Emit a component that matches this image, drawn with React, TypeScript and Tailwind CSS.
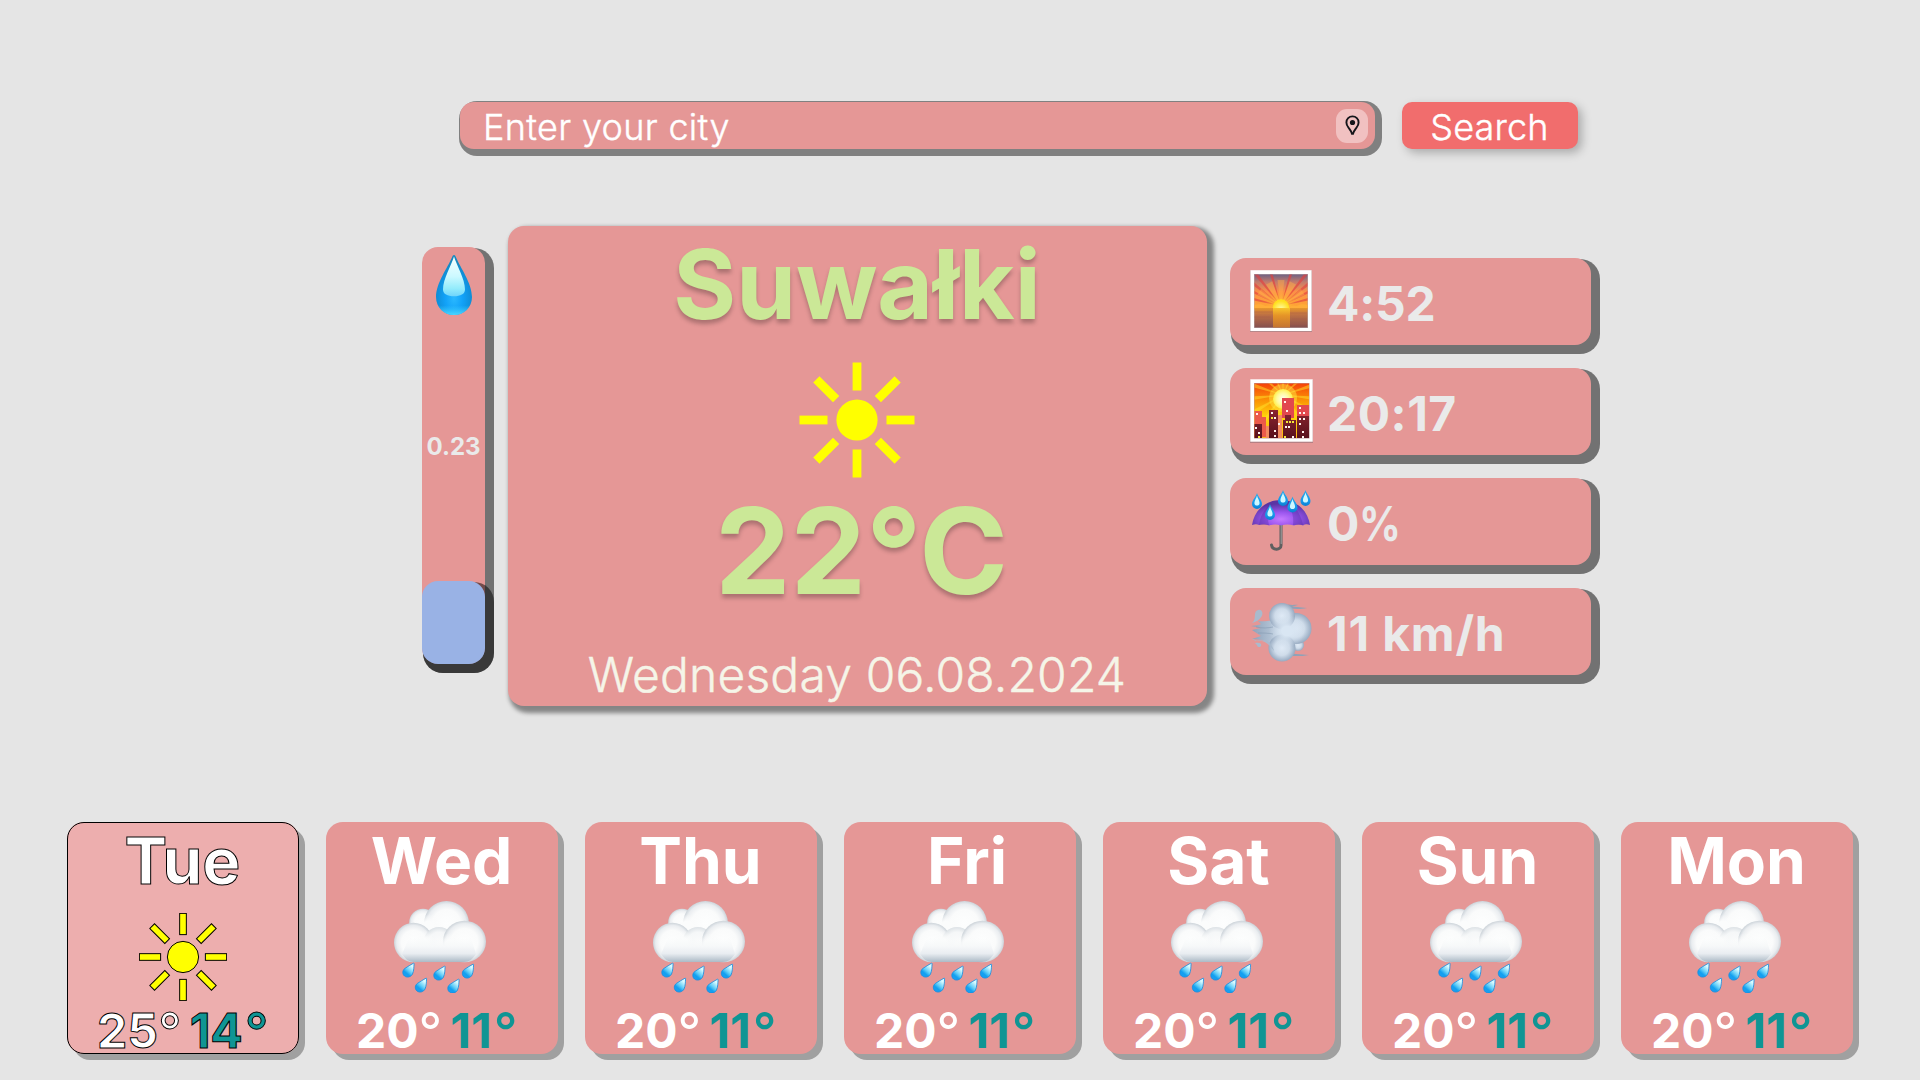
import React from "react";

const RAY_ANGLES = [0, 45, 90, 135, 180, 225, 270, 315];

function Sun({ className, outlined = false }: { className: string; outlined?: boolean }) {
  return (
    <svg
      viewBox="-58 -58 116 116"
      className={className}
      fill="#ffff00"
      stroke={outlined ? "#000" : "none"}
      strokeWidth={outlined ? 1.3 : 0}
    >
      <circle r="20.6" />
      {RAY_ANGLES.map((a) => (
        <rect key={a} x="-4.4" y="-57.5" width="8.8" height="28" transform={`rotate(${a})`} />
      ))}
    </svg>
  );
}

function Pin() {
  return (
    <svg viewBox="0 0 15 21" className="h-[21px] w-[15px]">
      <path
        d="M7.5 1.4C4 1.4 1.4 4 1.4 7.4c0 1.9.8 3.4 2 5.1 1.5 2.1 3.2 4 3.6 6.3h1c.4-2.3 2.1-4.2 3.6-6.3 1.2-1.7 2-3.2 2-5.1 0-3.400-2.600-6-6.100-6Z"
        fill="none"
        stroke="#15151a"
        strokeWidth="1.9"
      />
      <circle cx="7.5" cy="7.500" r="2.600" fill="#15151a" />
    </svg>
  );
}

function Droplet() {
  return (
    <svg viewBox="0 0 36 60" className="h-[60px] w-[36px]">
      <defs>
        <radialGradient id="dropBody" cx="0.5" cy="0.72" r="0.6">
          <stop offset="0" stopColor="#2ab8ff" />
          <stop offset="0.4" stopColor="#12a2f8" />
          <stop offset="0.75" stopColor="#0f90dc" />
          <stop offset="1" stopColor="#1589c0" />
        </radialGradient>
        <linearGradient id="dropFloor" x1="0" y1="0" x2="0" y2="1">
          <stop offset="0.84" stopColor="#3fd0ff" stopOpacity="0" />
          <stop offset="1" stopColor="#4ad8ff" />
        </linearGradient>
        <linearGradient id="dropLight" x1="0" y1="0" x2="0" y2="1">
          <stop offset="0" stopColor="#f6ffff" />
          <stop offset="0.5" stopColor="#ccf9ff" />
          <stop offset="0.8" stopColor="#94ecfc" />
          <stop offset="1" stopColor="#6fd4fb" />
        </linearGradient>
      </defs>
      <path d="M18 0c-1 0-1.600 1.300-2.200 2.700C12 12 0 28 0 42c0 10.500 8 18 18 18s18-7.500 18-18C36 28 24 12 20.200 2.700 19.600 1.300 19 0 18 0Z" fill="url(#dropBody)" />
      <path d="M18 0c-1 0-1.600 1.300-2.200 2.700C12 12 0 28 0 42c0 10.500 8 18 18 18s18-7.500 18-18C36 28 24 12 20.200 2.700 19.600 1.300 19 0 18 0Z" fill="url(#dropFloor)" />
      <path d="M18 1.500C15.500 10 7 24 7 34.500 7 39 11.500 41.300 18 41.300S29 39 29 34.500C29 24 20.500 10 18 1.500Z" fill="url(#dropLight)" />
    </svg>
  );
}

function RainCloud() {
  return (
    <svg viewBox="0 0 92 92" className="h-[92px] w-[92px]">
      <defs>
        <radialGradient id="puff" cx="0.5" cy="0.5" r="0.5">
          <stop offset="0" stopColor="#fdfefe" />
          <stop offset="0.62" stopColor="#fafbfb" />
          <stop offset="0.86" stopColor="#eaedf0" />
          <stop offset="1" stopColor="#ccd3d9" />
        </radialGradient>
        <radialGradient id="puffSoft" cx="0.5" cy="0.5" r="0.5">
          <stop offset="0" stopColor="#fbfcfc" />
          <stop offset="0.7" stopColor="#f5f7f8" />
          <stop offset="1" stopColor="#dde2e6" />
        </radialGradient>
        <radialGradient id="puffFill">
          <stop offset="0.4" stopColor="#fbfcfc" />
          <stop offset="1" stopColor="#fbfcfc" stopOpacity="0" />
        </radialGradient>
        <linearGradient id="cloudBase" x1="0" y1="0" x2="0" y2="1">
          <stop offset="0" stopColor="#f8fafa" stopOpacity="0" />
          <stop offset="0.35" stopColor="#f6f8f9" />
          <stop offset="0.65" stopColor="#e9edf1" />
          <stop offset="1" stopColor="#acbac6" />
        </linearGradient>
        <linearGradient id="rainDrop" x1="0.9" y1="0" x2="0.2" y2="1">
          <stop offset="0.2" stopColor="#d9fbff" />
          <stop offset="0.55" stopColor="#5fcdf8" />
          <stop offset="0.75" stopColor="#12a0f0" />
          <stop offset="1" stopColor="#1a9df2" />
        </linearGradient>
      </defs>
      <circle cx="29" cy="21.500" r="13.800" fill="url(#puff)" />
      <circle cx="52.500" cy="22.500" r="22.500" fill="url(#puff)" />
      <ellipse cx="34" cy="25" rx="12" ry="12" fill="url(#puffFill)" />
      <ellipse cx="19.500" cy="41.500" rx="19.500" ry="19.800" fill="url(#puff)" />
      <ellipse cx="45" cy="43" rx="16" ry="17" fill="url(#puffSoft)" />
      <ellipse cx="30" cy="42" rx="11" ry="13" fill="url(#puffFill)" />
      <ellipse cx="70.500" cy="40.500" rx="21.500" ry="20.800" fill="url(#puff)" />
      <ellipse cx="56" cy="44" rx="12" ry="12" fill="url(#puffFill)" />
      <path d="M15 37h62l5 16c-3 5-7 8-12 8H20c-5 0-9-3-12-8Z" fill="url(#cloudBase)" />
      {[
        [8.500, 62],
        [39.500, 65],
        [68, 63],
        [21, 77],
        [53.500, 78],
      ].map(([x, y]) => (
        <g key={`${x}-${y}`} transform={`translate(${x} ${y})`}>
          <path
            d="M11 .2C8.500 1.600 5 3.600 2.300 5.500-.3 7.400-.3 11.200 2 13c2.600 2 6.600 1 8-2 1.500-3.300 1.300-7 1.600-10.300 0-.5-.2-.7-.6-.5Z"
            fill="url(#rainDrop)"
            stroke="#138be0"
            strokeWidth="0.8"
          />
        </g>
      ))}
    </svg>
  );
}

function Sunrise() {
  return (
    <svg viewBox="0 0 62 62" className="h-[62px] w-[62px]">
      <defs>
        <linearGradient id="dawnSky" x1="0" y1="0" x2="0" y2="1">
          <stop offset="0" stopColor="#6f6284" />
          <stop offset="0.22" stopColor="#c27a6c" />
          <stop offset="0.5" stopColor="#fb9048" />
          <stop offset="1" stopColor="#ffa632" />
        </linearGradient>
        <linearGradient id="dawnSea" x1="0" y1="0" x2="0" y2="1">
          <stop offset="0" stopColor="#e8962c" />
          <stop offset="0.35" stopColor="#bd7044" />
          <stop offset="1" stopColor="#85504f" />
        </linearGradient>
        <radialGradient id="dawnSun" cx="0.5" cy="0.6" r="0.5">
          <stop offset="0" stopColor="#fffca8" />
          <stop offset="1" stopColor="#ffdf1e" />
        </radialGradient>
        <radialGradient id="dawnGlow">
          <stop offset="0" stopColor="#ffe03c" />
          <stop offset="1" stopColor="#ff9a30" stopOpacity="0" />
        </radialGradient>
        <linearGradient id="dawnPath" x1="0" y1="0" x2="0" y2="1">
          <stop offset="0" stopColor="#ffd52a" />
          <stop offset="0.4" stopColor="#f3a01e" />
          <stop offset="1" stopColor="#d98028" />
        </linearGradient>
        <clipPath id="dawnClip">
          <rect x="4.500" y="4.500" width="53" height="34" />
        </clipPath>
      </defs>
      <rect x="0" y="0.600" width="62" height="61.400" fill="#b5888a" />
      <rect x="0.400" y="0.200" width="61.200" height="60.800" fill="#fff" />
      <rect x="4" y="4" width="54" height="54" fill="#b9a9a9" />
      <rect x="4.500" y="4.500" width="53" height="34" fill="url(#dawnSky)" />
      <g clipPath="url(#dawnClip)">
        {[-76, -63, -51, -38, -17, 17, 38, 51, 63, 76].map((a) => (
          <path key={a} d="M31 36 29.200-8h3.600Z" fill="#e2403f" opacity="0.650" transform={`rotate(${a} 31 36)`} />
        ))}
        {[-57, -27, 0, 27, 57].map((a) => (
          <path key={a} d="M31 36 27.500 10h7Z" fill="#ffb04a" opacity="0.450" transform={`rotate(${a} 31 36)`} />
        ))}
        <circle cx="31" cy="37" r="17" fill="url(#dawnGlow)" />
        <path d="M4 35c5-1 8-1 11 1 5-1 9 0 12 3H4ZM58 35c-5-1-8-1-11 1-5-1-9 0-12 3h23Z" fill="#ffad38" />
        <circle cx="31" cy="37.500" r="8.300" fill="url(#dawnSun)" />
      </g>
      <rect x="4.500" y="38" width="53" height="19.500" fill="url(#dawnSea)" />
      <rect x="23" y="38" width="17" height="19.500" fill="url(#dawnPath)" opacity="0.750" />
      <path d="M4.500 42h18M40 43h17M4.500 47h16M42 49h15M4.500 52h18M40 54h17" stroke="#a75c4c" strokeWidth="0.800" opacity="0.500" />
    </svg>
  );
}

function CitySunset() {
  return (
    <svg viewBox="0 0 63 64" className="h-[64px] w-[63px]">
      <defs>
        <linearGradient id="duskSky" x1="0" y1="0" x2="0" y2="1">
          <stop offset="0" stopColor="#f5400a" />
          <stop offset="0.3" stopColor="#fb9005" />
          <stop offset="0.6" stopColor="#ffd40a" />
          <stop offset="1" stopColor="#f9b414" />
        </linearGradient>
        <radialGradient id="duskSun">
          <stop offset="0" stopColor="#fffff0" />
          <stop offset="0.6" stopColor="#fffa9e" />
          <stop offset="1" stopColor="#ffee4a" />
        </radialGradient>
        <linearGradient id="tower" x1="0" y1="0" x2="0" y2="1">
          <stop offset="0" stopColor="#8a2530" />
          <stop offset="1" stopColor="#56101c" />
        </linearGradient>
        <clipPath id="duskClip">
          <rect x="4.500" y="4.500" width="54.500" height="54.500" />
        </clipPath>
      </defs>
      <rect x="0" y="1" width="63" height="63" fill="#b58084" />
      <rect x="0.300" y="0.300" width="62.400" height="62.400" fill="#fff" />
      <rect x="4" y="4" width="55.500" height="55.500" fill="#b99" />
      <g clipPath="url(#duskClip)">
        <rect x="4" y="4" width="56" height="56" fill="url(#duskSky)" />
        {[0, 24, 48, 72, 96, 120, 144, 168, 192, 216, 240, 264, 288, 312, 336].map((a) => (
          <path key={a} d="M33 16 30-34h6Z" fill="#ffe12a" opacity="0.500" transform={`rotate(${a} 33 16)`} />
        ))}
        <circle cx="33" cy="19" r="14" fill="#ffe640" opacity="0.500" />
        <circle cx="33" cy="20" r="10" fill="url(#duskSun)" />
        <path d="M4 32h8v6h4v20H4Z" fill="#ec5a4a" />
        <path d="M27 36h5v24h-5ZM16 47h4v13h-4Z" fill="#f28a60" />
        <path d="M32 19h12v20H32ZM47 26h13v14H47Z" fill="#e2484e" />
        <path d="M19 31h9v29h-9ZM4 45h8v15H4ZM32 41h3v-5h6v5h5v19H33V41ZM47 37h13v23H47Z" fill="url(#tower)" />
        <path d="M34 22h2v2h-2ZM36 31h2v2h-2ZM49 28h2v2h-2ZM49 33h2v2h-2ZM53 33h2v2h-2ZM21 33h2v2h-2ZM24 38h2v2h-2ZM6 34h2v2H6ZM49 39h2v2h-2ZM53 39h2v2h-2ZM49 44h2v2h-2ZM24 51h2v2h-2ZM24 56h2v2h-2ZM35 47h2v2h-2ZM38 47h2v2h-2ZM5 48h2v2H5ZM8 53h2v2H8ZM28 44h2v2h-2ZM52 52h2v2h-2ZM52 57h2v2h-2ZM42 57h2v2h-2Z" fill="#fff3f0" />
        <path d="M21 38h2v2h-2ZM36 42h2v2h-2ZM39 42h2v2h-2ZM42 42h2v2h-2ZM8 57h2v2H8ZM34 57h2v2h-2Z" fill="#f4e83a" />
      </g>
    </svg>
  );
}

function Umbrella() {
  return (
    <svg viewBox="0 0 62 62" className="h-[62px] w-[62px]">
      <defs>
        <radialGradient id="canopy" cx="0.5" cy="0.75" r="0.6">
          <stop offset="0" stopColor="#c57aff" />
          <stop offset="0.45" stopColor="#9a55ee" />
          <stop offset="1" stopColor="#5a34a4" />
        </radialGradient>
        <linearGradient id="umbrellaDrop" x1="0" y1="0" x2="0" y2="1">
          <stop offset="0" stopColor="#26a8ea" />
          <stop offset="0.7" stopColor="#1597ea" />
          <stop offset="1" stopColor="#0b7fd0" />
        </linearGradient>
      </defs>
      <path d="M31 34v21.500c0 4.500-8.500 5.500-9.500-.5" fill="none" stroke="#5f5f60" strokeWidth="3" strokeLinecap="round" />
      <path d="M31.200 34v20" stroke="#a5a2a1" strokeWidth="1" />
      <path d="M2 35C4 21 15 10 31 10s27 11 29 25c-3-1-5-1-7 .5-3-1.500-6-1.500-9 0-4-1.500-9-1.500-13 0-4-1.500-8-1.500-12 0-4-1.500-7-1.500-10-.5-2-1-4-1-7 0Z" fill="url(#canopy)" />
      <path d="M9 35c1-9 6-17 13-22-4 7-5 15-3 22ZM43 35c1-8-1-16-7-24 10 5 15 14 17 24Z" fill="#4f2aa0" opacity="0.350" />
      {[
        [2, 3],
        [15, 14],
        [28, 0],
        [37.500, 6.500],
        [50.500, 0],
      ].map(([x, y]) => (
        <g key={`${x}-${y}`} transform={`translate(${x} ${y})`}>
          <path d="M5 0C4 4 0 7 0 11a5 5 0 0 0 10 0C10 7 6 4 5 0Z" fill="url(#umbrellaDrop)" />
          <path d="M5 2.500C4.500 5 2.400 7.500 2.400 10c0 1.800 1.200 2.600 2.600 2.600S7.600 11.800 7.600 10C7.600 7.500 5.500 5 5 2.500Z" fill="#cdf8ff" />
        </g>
      ))}
    </svg>
  );
}

function Wind() {
  return (
    <svg viewBox="0 0 62 60" className="h-[60px] w-[62px]">
      <defs>
        <radialGradient id="gust" cx="0.5" cy="0.5" r="0.5">
          <stop offset="0" stopColor="#dfeaf6" />
          <stop offset="0.55" stopColor="#cfdcea" />
          <stop offset="1" stopColor="#97aac1" />
        </radialGradient>
        <radialGradient id="gustCore">
          <stop offset="0.3" stopColor="#d9e6f3" />
          <stop offset="1" stopColor="#d3e0ee" stopOpacity="0" />
        </radialGradient>
        <linearGradient id="gustTail" x1="0" y1="0" x2="1" y2="0">
          <stop offset="0" stopColor="#8ca0b8" />
          <stop offset="0.6" stopColor="#c0cfdf" />
          <stop offset="1" stopColor="#d8e5f2" />
        </linearGradient>
      </defs>
      <path d="M38 1.500c5 1 7 0 10 .5l-6 1.500 15 1.500c-7 1.500-12 1-18 .5ZM40 50.500l19 1.500c-8 1.500-12 1-21 1Z" fill="#8fa2b8" />
      <circle cx="48" cy="42" r="6" fill="url(#gust)" />
      <path d="M8 18c8 1 11-1 15 0h17l8 16-8 8H27c-6-1-10-1-14-5l-11-1 9-3-9-6 9-2L1 23c6-1 9-1 10-2Z" fill="url(#gustTail)" />
      <circle cx="46" cy="25.500" r="15.500" fill="url(#gust)" />
      <circle cx="32" cy="13" r="13" fill="url(#gust)" />
      <circle cx="32" cy="45" r="13.500" fill="url(#gust)" />
      <ellipse cx="37" cy="28" rx="18" ry="16" fill="url(#gustCore)" />
      <path d="M2 20C7 16 3 10 7 7.500c4-2.500 7 2 4.500 6C9.500 17 6 19 2 20ZM1 35c5 3 8 3 14 2 5 2 8 7 9 11-4-5-7-9-12-10-5 0-8 0-11-3ZM5 40c4-1 7 0 6 3-1 2-4 1-4-1Z" fill="#a9bacd" />
      <path d="M6 24c7 1.500 12 1 17 0M8 30c6 0 10 0 15 1" stroke="#8197af" strokeWidth="0.900" fill="none" opacity="0.600" />
    </svg>
  );
}

const details = [
  { icon: <Sunrise />, value: "4:52", offset: "pt-[12px]", tracking: "-tracking-[0.2px]" },
  { icon: <CitySunset />, value: "20:17", offset: "pt-[11px]", tracking: "tracking-[0.5px]" },
  { icon: <Umbrella />, value: "0", unit: "%", offset: "pt-[12px]", tracking: "" },
  { icon: <Wind />, value: "11 km/h", offset: "pt-[15px]", tracking: "tracking-[0.8px]" },
];

const days = [
  { name: "Tue", high: 25, low: 14, sunny: true },
  { name: "Wed", high: 20, low: 11, sunny: false },
  { name: "Thu", high: 20, low: 11, sunny: false },
  { name: "Fri", high: 20, low: 11, sunny: false },
  { name: "Sat", high: 20, low: 11, sunny: false },
  { name: "Sun", high: 20, low: 11, sunny: false },
  { name: "Mon", high: 20, low: 11, sunny: false },
];

export default function App() {
  return (
    <div className="flex h-[1080px] w-[1920px] flex-col overflow-hidden bg-[#e5e5e5] font-['Inter',sans-serif]">
      <header className="mt-[102px] ml-[460px] flex h-[47px] gap-[27px] text-[36px] font-light text-white [-webkit-text-stroke:0.4px_white]">
        <div className="flex w-[915px] items-center rounded-[14px] bg-[#e59796] pr-[7px] pl-[23px] shadow-[3px_3px_0_4px_#808080]">
          <input
            placeholder="Enter your city"
            className="h-[47px] min-w-0 flex-1 bg-transparent pt-[2px] tracking-[0.32px] outline-none placeholder:text-white"
          />
          <button className="flex h-[34px] w-[32px] items-center justify-center rounded-[11px] bg-[#f1c1c1]">
            <Pin />
          </button>
        </div>
        <button className="flex w-[176px] items-center justify-center rounded-[10px] bg-[#f16d6d] pt-[3px] pr-[1px] tracking-[0.15px] shadow-[4px_4px_10px_rgba(0,0,0,0.25)] [-webkit-text-stroke:0.4px_white]">
          Search
        </button>
      </header>

      <main className="mt-[77px] ml-[422px] flex">
        <aside className="mt-[21px] flex h-[417px] w-[63px] flex-col items-center rounded-[16px] bg-[#e59796] pt-[8px] shadow-[5px_5px_0_4px_rgba(0,0,0,0.5)]">
          <Droplet />
          <p className="mt-[117px] text-[24px] leading-[29px] font-bold text-[#eaeaea]">0.23</p>
          <div className="mt-auto h-[83px] w-full rounded-[16px] bg-[#99b2e5] shadow-[5px_5px_0_4px_rgba(0,0,0,0.5)]" />
        </aside>

        <section className="ml-[23px] flex h-[480px] w-[699px] flex-col items-center rounded-[16px] bg-[#e59796] pr-[1px] shadow-[4px_4px_4px_3px_rgba(0,0,0,0.42)]">
          <h1 className="text-[96px] leading-[116px] font-bold text-[#cbe897] [text-shadow:0_4px_4px_rgba(0,0,0,0.25)]">Suwałki</h1>
          <div className="flex h-[136px] items-center pt-[19px]">
            <Sun className="h-[116px] w-[116px]" />
          </div>
          <p className="pl-[9px] text-[120px] leading-[145px] font-bold text-[#cbe897] [text-shadow:0_4px_4px_rgba(0,0,0,0.25)]">22°C</p>
          <p className="mt-[23px] text-[48px] leading-[58px] font-light tracking-[0.17px] text-[#f5f5e8] [-webkit-text-stroke:0.4px_#f5f5e8]">
            Wednesday 06.08.2024
          </p>
        </section>

        <ul className="mt-[32px] ml-[23px] flex w-[361px] flex-col gap-[23px]">
          {details.map((d) => (
            <li
              key={d.value}
              className="flex h-[87px] rounded-[16px] bg-[#e59796] pl-[20px] shadow-[5px_5px_0_4px_rgba(0,0,0,0.5)]"
            >
              <div className={`w-[77px] ${d.offset}`}>{d.icon}</div>
              <span className={`pt-[17px] text-[48px] leading-[58px] font-bold text-[#eaeaea] ${d.tracking}`}>
                {d.value}
                {d.unit && <span className="inline-block origin-left scale-x-[0.86]">{d.unit}</span>}
              </span>
            </li>
          ))}
        </ul>
      </main>

      <footer className="mt-[116px] ml-[67px] flex gap-[27px]">
        {days.map((d) => (
          <article
            key={d.name}
            className={`flex h-[232px] w-[232px] flex-col items-center rounded-[17px] font-bold text-white shadow-[6px_6px_0_rgba(0,0,0,0.3)] ${
              d.sunny ? "bg-[#edaeae] outline outline-1 -outline-offset-1 outline-black [-webkit-text-stroke:1px_black]" : "bg-[#e59796]"
            }`}
          >
            <h2 className={`text-[64px] leading-[77px] ${d.name === "Fri" ? "pl-[14px]" : "pr-[1px]"}`}>{d.name}</h2>
            <div className={`flex h-[102px] shrink-0 ${d.sunny ? "pt-[14px]" : "pt-[2px] pr-[4px]"}`}>
              {d.sunny ? <Sun outlined className="h-[88px] w-[88px]" /> : <RainCloud />}
            </div>
            <p className="mt-px flex shrink-0 items-baseline gap-[8px] self-start pl-[30px] text-[48px] leading-[58px]">
              <span>
                {d.high}
                <span className="text-[52px] leading-none font-normal [vertical-align:-2px]">°</span>
              </span>
              <span className="text-[#0f9594]">
                {d.low}
                <span className="ml-[2px] text-[52px] leading-none font-medium [vertical-align:-2px]">°</span>
              </span>
            </p>
          </article>
        ))}
      </footer>
    </div>
  );
}
